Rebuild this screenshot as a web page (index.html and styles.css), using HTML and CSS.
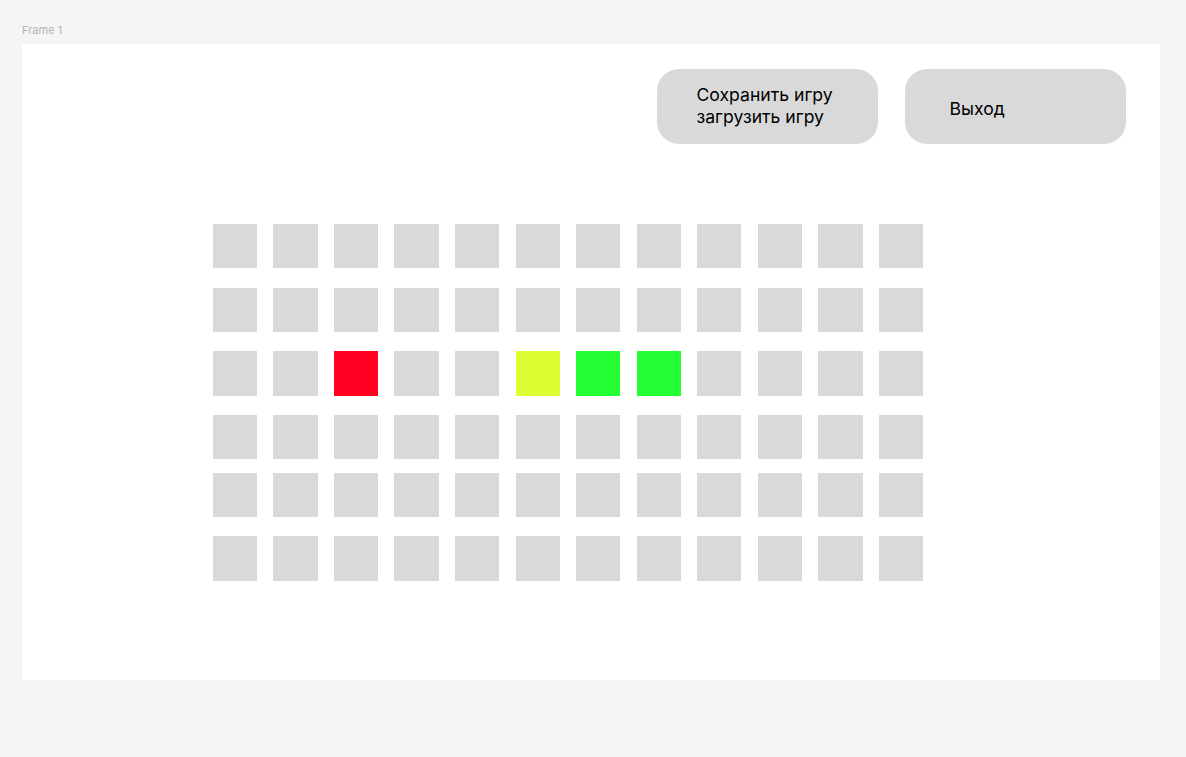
FILE: index.html
```html
<!DOCTYPE html>
<html>
<head>
    <title>Frame 1</title>
    <link rel="stylesheet" href="styles.css">
</head>
<body>
    <div class="frame-label">Frame 1</div>
    <div class="frame">
        <div class="top-bar">
            <div class="btn btn-menu">
                <span>Сохранить игру</span>
                <span>загрузить игру</span>
            </div>
            <div class="btn btn-exit">
                <span>Выход</span>
            </div>
        </div>

        <div class="board" id="board"></div>
    </div>

    <script>
        // 6 rows x 12 cells, a few coloured ones in row 3
        const board = document.getElementById("board");
        const colored = { "2-2": "red", "2-5": "yellow", "2-6": "green", "2-7": "green" };

        for (let r = 0; r < 6; r++) {
            const row = document.createElement("div");
            row.className = r === 4 ? "row row-tight" : "row";
            for (let c = 0; c < 12; c++) {
                const cell = document.createElement("div");
                cell.className = "cell";
                const key = r + "-" + c;
                if (colored[key]) {
                    cell.classList.add("cell-" + colored[key]);
                }
                row.appendChild(cell);
            }
            board.appendChild(row);
        }
    </script>
</body>
</html>
```

FILE: styles.css
```css
body {
    margin: 0;
    padding: 22px 22px 0 22px;
    background-color: #f5f5f5;
    font-family: Inter, "Noto Sans", sans-serif;
}

.frame-label {
    font-size: 11px;
    line-height: 16px;
    color: #b3b3b3;
    margin-bottom: 6px;
}

.frame {
    width: 1138px;
    height: 636px;
    background-color: #fff;
    box-sizing: border-box;
    padding-top: 25px;
}

.top-bar {
    display: flex;
    justify-content: flex-end;
    gap: 26.5px;
    padding-right: 34px;
}

.btn {
    width: 221.5px;
    height: 75px;
    border-radius: 22px;
    background-color: #d9d9d9;
    display: flex;
    flex-direction: column;
    justify-content: center;
    box-sizing: border-box;
    font-size: 17.6px;
    line-height: 22px;
    color: #000;
}

.btn-menu {
    padding-left: 40px;
    padding-bottom: 2px;
}

.btn-exit {
    padding-left: 45px;
    padding-top: 5px;
}

.board {
    margin-top: 80px;
    margin-left: 190.7px;
    display: flex;
    flex-direction: column;
    gap: 19.4px;
}

.row {
    display: flex;
    gap: 16.27px;
}

.row-tight {
    margin-top: -6px;
}

.cell {
    width: 44.3px;
    height: 44.3px;
    background-color: #d9d9d9;
}

.cell-red {
    background-color: #ff0020;
}

.cell-yellow {
    background-color: #dbff33;
}

.cell-green {
    background-color: #24ff33;
}
```
